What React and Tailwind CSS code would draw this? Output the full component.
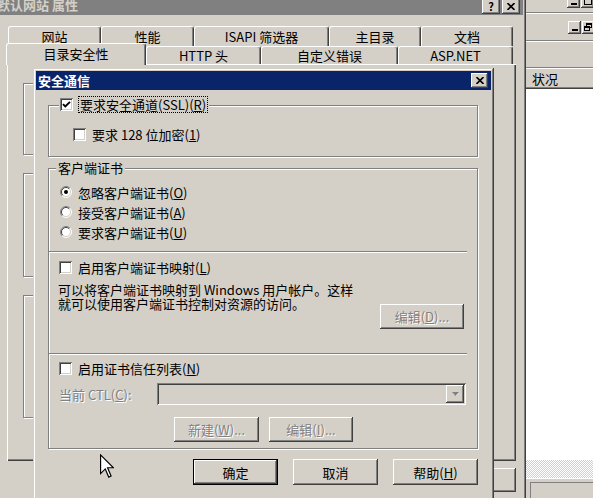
import React from 'react'

const btnRaised = 'shadow-[inset_-1px_-1px_#404040,inset_1px_1px_#ffffff,inset_-2px_-2px_#808080,inset_2px_2px_#d4d0c8]'
const winRaised = 'shadow-[inset_-1px_-1px_#404040,inset_1px_1px_#d4d0c8,inset_-2px_-2px_#808080,inset_2px_2px_#ffffff]'
const sunken = 'shadow-[inset_1px_1px_#808080,inset_-1px_-1px_#ffffff,inset_2px_2px_#404040,inset_-2px_-2px_#d4d0c8]'
const etched = 'border border-[#808080] shadow-[inset_1px_1px_#ffffff,1px_1px_#ffffff]'
const grayText = 'text-[#808080] [text-shadow:1px_1px_0_#ffffff]'

function Btn({ className = '', children, disabled, isDefault }) {
  return (
    <div className={`flex bg-[#d4d0c8] ${isDefault ? 'border border-black' : ''} ${className}`}>
      <div className={`flex-1 flex items-center justify-center leading-[15px] ${btnRaised} ${disabled ? grayText : ''}`}>
        {children}
      </div>
    </div>
  )
}

function Check({ checked }) {
  return (
    <div className={`w-[13px] h-[13px] shrink-0 bg-white ${sunken}`}>
      {checked && (
        <svg width="13" height="13" viewBox="0 0 13 13">
          <path d="M3 6.2 L5.3 8.5 L10 3.8" stroke="#000" strokeWidth="1.9" fill="none" />
        </svg>
      )}
    </div>
  )
}

function Radio({ checked }) {
  return (
    <svg width="12" height="12" viewBox="0 0 12 12" className="shrink-0">
      <circle cx="6" cy="6" r="5" fill="#fff" />
      <path d="M9.9 2.1 A5.5 5.5 0 0 0 2.1 9.9" stroke="#808080" fill="none" />
      <path d="M2.1 9.9 A5.5 5.5 0 0 0 9.9 2.1" stroke="#ffffff" fill="none" />
      <path d="M9.2 2.8 A4.5 4.5 0 0 0 2.8 9.2" stroke="#404040" fill="none" />
      <path d="M2.8 9.2 A4.5 4.5 0 0 0 9.2 2.8" stroke="#d4d0c8" fill="none" />
      {checked && <circle cx="6" cy="6" r="2" fill="#000" />}
    </svg>
  )
}

function Tab({ className = '', children }) {
  return (
    <div
      className={`flex items-center justify-center border-t border-l border-r border-t-white border-l-white border-r-[#404040] rounded-t-[3px] shadow-[inset_-1px_0_#808080] bg-[#d4d0c8] leading-[15px] ${className}`}
    >
      {children}
    </div>
  )
}

function Sep() {
  return <div className="w-[418px] h-[2px] border-t border-t-[#808080] border-b border-b-white" />
}

function MmcButtons({ max }) {
  return (
    <div className="flex gap-[1px]">
      <div className={`w-[13px] h-[13px] flex items-end justify-center pb-[3px] ${btnRaised}`}>
        <div className="w-[6px] h-[2px] bg-black" />
      </div>
      {max ? (
        <div className={`w-[13px] h-[13px] flex items-center justify-center ${btnRaised}`}>
          <div className="w-[8px] h-[7px] border border-black border-t-2" />
        </div>
      ) : (
        <div className={`w-[13px] h-[13px] relative ${btnRaised}`}>
          <div className="absolute left-[4px] top-[2px] w-[6px] h-[5px] border border-black border-t-2" />
          <div className="absolute left-[2px] top-[5px] w-[6px] h-[5px] border border-black border-t-2 bg-[#d4d0c8]" />
        </div>
      )}
    </div>
  )
}

export default function App() {
  return (
    <div className="relative w-[593px] h-[498px] overflow-hidden bg-[#d4d0c8] font-['Noto_Sans_CJK_SC',sans-serif] text-[13px] text-black">
      {/* MMC window behind */}
      <div className="absolute left-[518px] top-0 w-[75px] h-[498px] bg-[#d4d0c8] flex flex-col">
        <div className="h-[12px] flex justify-end items-start overflow-hidden">
          <div className="-mt-[5px] mr-[-1px]">
            <MmcButtons max />
          </div>
        </div>
        <div className="h-[2px] border-t border-t-[#808080] border-b border-b-white" />
        <div className="h-[26px] flex justify-end items-center">
          <div className="mr-[-2px]">
            <MmcButtons />
          </div>
        </div>
        <div className="h-[2px] border-t border-t-[#808080] border-b border-b-white" />
        <div className="h-[25px]" />
        <div className="h-[22px] flex items-center pl-[14px] border-t border-t-[#808080] border-b border-b-[#404040] shadow-[inset_0_1px_#ffffff,inset_0_-1px_#808080]">
          <span className="leading-[15px]">状况</span>
        </div>
        <div className="h-[371px] bg-white" />
        <div className="h-[18px] bg-[repeating-conic-gradient(#d4d0c8_0_25%,#ffffff_0_50%)] bg-[length:2px_2px]" />
        <div className="flex-1 border-t border-t-white pt-[3px] pl-[12px]">
          <div className="h-full border-t border-l border-t-[#808080] border-l-[#808080]" />
        </div>
      </div>

      {/* Back properties window */}
      <div className={`absolute left-[-4px] top-[-6px] w-[530px] h-[530px] p-[3px] bg-[#d4d0c8] flex flex-col ${winRaised}`}>
        <div className="h-[18px] bg-[#808080] flex items-center pr-[3px]">
          <span className="-ml-[2px] -mt-[3px] font-bold text-[#d4d0c8] leading-[14px]">默认网站 属性</span>
          <div className="ml-auto flex gap-[2px]">
            <div className={`w-[18px] h-[15px] flex items-center justify-center bg-[#d4d0c8] ${btnRaised}`}>
              <span className="font-bold text-[11px] leading-[11px]">?</span>
            </div>
            <div className={`w-[18px] h-[15px] flex items-center justify-center bg-[#d4d0c8] ${btnRaised}`}>
              <svg width="8" height="7" viewBox="0 0 8 7">
                <path d="M0.5 0 L7.5 7 M7.5 0 L0.5 7" stroke="#000" strokeWidth="1.6" />
              </svg>
            </div>
          </div>
        </div>

        <div className="mt-[11px] flex pl-[9px]">
          <Tab className="w-[93px] h-[20px]">网站</Tab>
          <Tab className="w-[93px] h-[20px]">性能</Tab>
          <Tab className="w-[135px] h-[20px]">ISAPI 筛选器</Tab>
          <Tab className="w-[92px] h-[20px]">主目录</Tab>
          <Tab className="w-[92px] h-[20px]">文档</Tab>
        </div>
        <div className="flex items-start h-[18px] pl-[7px]">
          <Tab className="relative z-10 w-[140px] h-[22px] -mt-[3px] pb-[3px]">目录安全性</Tab>
          <Tab className="w-[115px] h-[18px]">HTTP 头</Tab>
          <Tab className="w-[137px] h-[18px]">自定义错误</Tab>
          <Tab className="w-[115px] h-[18px]">ASP.NET</Tab>
        </div>

        <div className="ml-[8px] w-[509px] h-[397px] flex flex-col gap-[18px] pt-[19px] pl-[16px] shadow-[inset_1px_1px_#ffffff,inset_-1px_-1px_#404040,inset_-2px_-2px_#808080]">
          <div className={`w-[460px] h-[72px] ${etched}`} />
          <div className={`w-[460px] h-[104px] ${etched}`} />
          <div className={`w-[460px] h-[123px] ${etched}`} />
        </div>

        {/* back dialog buttons, hidden behind the front dialog */}
        <div className="ml-[8px] w-[509px] mt-[7px] flex justify-end gap-[6px]">
          <Btn className="w-[75px] h-[24px]" />
          <Btn className="w-[75px] h-[24px]" />
          <Btn className="w-[75px] h-[24px]" />
          <Btn className="w-[75px] h-[24px]" />
        </div>
      </div>

      {/* Secure communications dialog */}
      <div className={`absolute left-[33px] top-[68px] w-[461px] h-[450px] p-[3px] bg-[#d4d0c8] flex flex-col ${winRaised}`}>
        <div className="h-[19px] bg-[#0a246a] flex items-center pl-[2px] pr-[3px]">
          <span className="font-bold text-white leading-[15px]">安全通信</span>
          <div className={`ml-auto w-[17px] h-[15px] flex items-center justify-center bg-[#d4d0c8] ${btnRaised}`}>
            <svg width="8" height="7" viewBox="0 0 8 7">
              <path d="M0.5 0 L7.5 7 M7.5 0 L0.5 7" stroke="#000" strokeWidth="1.6" />
            </svg>
          </div>
        </div>

        <div className="flex flex-col pl-[12px] pt-[15px]">
          {/* SSL group */}
          <div className={`relative w-[430px] h-[52px] ${etched}`}>
            <div className="absolute left-[10px] top-[-11px] h-[18px] flex items-center gap-[5px] px-[1px] bg-[#d4d0c8]">
              <Check checked />
              <span className="border border-dotted border-black px-[1px] leading-[15px]">
                要求安全通道(SSL)(<u>R</u>)
              </span>
            </div>
            <div className="flex items-center gap-[6px] pl-[24px] pt-[21px] h-[36px]">
              <Check />
              <span className="leading-[15px]">
                要求 128 位加密(<u>1</u>)
              </span>
            </div>
          </div>

          {/* client certificates group */}
          <div className={`relative mt-[11px] w-[430px] h-[281px] ${etched}`}>
            <span className="absolute left-[7px] top-[-9px] px-[2px] bg-[#d4d0c8] leading-[15px]">客户端证书</span>
            <div className="flex flex-col pt-[13px] pl-[11px]">
              <div className="h-[20px] flex items-center gap-[6px]">
                <Radio checked />
                <span className="leading-[15px]">忽略客户端证书(<u>O</u>)</span>
              </div>
              <div className="h-[20px] flex items-center gap-[6px]">
                <Radio />
                <span className="leading-[15px]">接受客户端证书(<u>A</u>)</span>
              </div>
              <div className="h-[20px] flex items-center gap-[6px]">
                <Radio />
                <span className="leading-[15px]">要求客户端证书(<u>U</u>)</span>
              </div>
            </div>

            <div className="mt-[9px]">
              <Sep />
            </div>

            <div className="mt-[6px] h-[16px] flex items-center gap-[6px] pl-[10px]">
              <Check />
              <span className="leading-[15px]">启用客户端证书映射(<u>L</u>)</span>
            </div>

            <div className="mt-[8px] flex pl-[9px] pr-[13px]">
              <p className="leading-[14px]">
                可以将客户端证书映射到 Windows 用户帐户。这样
                <br />
                就可以使用客户端证书控制对资源的访问。
              </p>
              <Btn disabled className="ml-auto mt-[21px] w-[84px] h-[25px] shrink-0">
                编辑(<u>D</u>)...
              </Btn>
            </div>

            <div className="mt-[24px]">
              <Sep />
            </div>

            <div className="mt-[5px] h-[16px] flex items-center gap-[6px] pl-[10px]">
              <Check />
              <span className="leading-[15px]">启用证书信任列表(<u>N</u>)</span>
            </div>

            <div className="mt-[7px] flex items-center pl-[10px]">
              <span className={`w-[98px] leading-[15px] ${grayText}`}>
                当前 CTL(<u>C</u>):
              </span>
              <div className={`w-[309px] h-[22px] flex justify-end p-[2px] bg-[#d4d0c8] ${sunken}`}>
                <div className={`w-[18px] h-full flex items-center justify-center bg-[#d4d0c8] ${btnRaised}`}>
                  <svg width="7" height="5" viewBox="0 0 7 5">
                    <path d="M1 1 L7 1 L4 4 Z" fill="#fff" />
                    <path d="M0 0 L7 0 L3.5 4 Z" fill="#808080" />
                  </svg>
                </div>
              </div>
            </div>

            <div className="mt-[12px] flex gap-[10px] pl-[125px]">
              <Btn disabled className="w-[85px] h-[25px]">
                新建(<u>W</u>)...
              </Btn>
              <Btn disabled className="w-[84px] h-[25px]">
                编辑(<u>I</u>)...
              </Btn>
            </div>
          </div>

          <div className="mt-[10px] w-[430px] flex justify-end gap-[15px]">
            <Btn isDefault className="w-[85px] h-[26px]">确定</Btn>
            <Btn className="w-[85px] h-[26px]">取消</Btn>
            <Btn className="w-[85px] h-[26px]">
              帮助(<u>H</u>)
            </Btn>
          </div>
        </div>
      </div>

      {/* mouse pointer */}
      <svg className="absolute left-[100px] top-[454px]" width="14" height="24" viewBox="0 0 12 20">
        <path
          d="M0.5 0.5 L0.5 16.5 L4.5 12.5 L7.5 19.5 L9.5 18.5 L6.5 11.5 L11.5 11.5 Z"
          fill="#fff"
          stroke="#000"
          strokeWidth="1"
        />
      </svg>
    </div>
  )
}
